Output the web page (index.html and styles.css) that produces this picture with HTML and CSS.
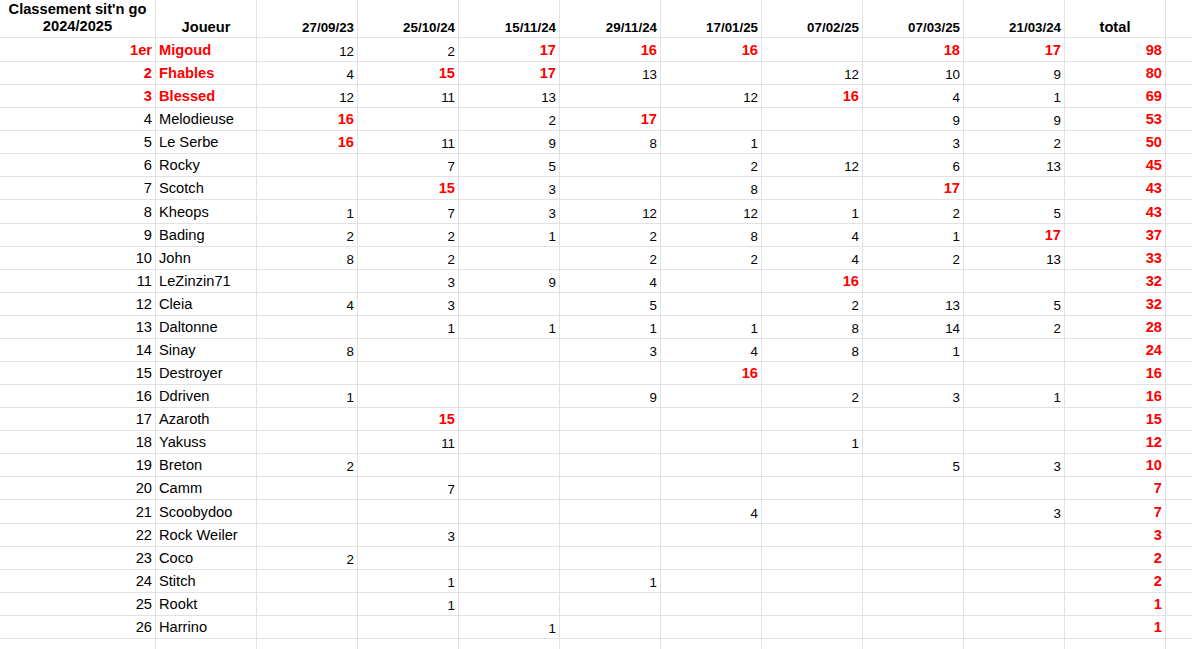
FILE: index.html
```html
<!DOCTYPE html>
<html lang="fr">
<head>
<meta charset="utf-8">
<title>Classement sit'n go 2024/2025</title>
<link rel="stylesheet" href="styles.css">
</head>
<body>
<div class="sheet">
  <div class="row head">
    <div class="c hd ctr title">Classement sit'n go<br>2024/2025</div>
    <div class="c hd ctr">Joueur</div>
    <div class="c hd date">27/09/23</div>
    <div class="c hd date">25/10/24</div>
    <div class="c hd date">15/11/24</div>
    <div class="c hd date">29/11/24</div>
    <div class="c hd date">17/01/25</div>
    <div class="c hd date">07/02/25</div>
    <div class="c hd date">07/03/25</div>
    <div class="c hd date">21/03/24</div>
    <div class="c hd ctr">total</div>
    <div class="c end"></div>
  </div>

  <div class="row first">
    <div class="c hi">1er</div><div class="c nm hi">Migoud</div>
    <div class="c">12</div><div class="c">2</div><div class="c hi">17</div><div class="c hi">16</div><div class="c hi">16</div><div class="c"></div><div class="c hi">18</div><div class="c hi">17</div>
    <div class="c hi">98</div><div class="c end"></div>
  </div>
  <div class="row">
    <div class="c hi">2</div><div class="c nm hi">Fhables</div>
    <div class="c">4</div><div class="c hi">15</div><div class="c hi">17</div><div class="c">13</div><div class="c"></div><div class="c">12</div><div class="c">10</div><div class="c">9</div>
    <div class="c hi">80</div><div class="c end"></div>
  </div>
  <div class="row">
    <div class="c hi">3</div><div class="c nm hi">Blessed</div>
    <div class="c">12</div><div class="c">11</div><div class="c">13</div><div class="c"></div><div class="c">12</div><div class="c hi">16</div><div class="c">4</div><div class="c">1</div>
    <div class="c hi">69</div><div class="c end"></div>
  </div>
  <div class="row">
    <div class="c rk">4</div><div class="c nm">Melodieuse</div>
    <div class="c hi">16</div><div class="c"></div><div class="c">2</div><div class="c hi">17</div><div class="c"></div><div class="c"></div><div class="c">9</div><div class="c">9</div>
    <div class="c hi">53</div><div class="c end"></div>
  </div>
  <div class="row">
    <div class="c rk">5</div><div class="c nm">Le Serbe</div>
    <div class="c hi">16</div><div class="c">11</div><div class="c">9</div><div class="c">8</div><div class="c">1</div><div class="c"></div><div class="c">3</div><div class="c">2</div>
    <div class="c hi">50</div><div class="c end"></div>
  </div>
  <div class="row">
    <div class="c rk">6</div><div class="c nm">Rocky</div>
    <div class="c"></div><div class="c">7</div><div class="c">5</div><div class="c"></div><div class="c">2</div><div class="c">12</div><div class="c">6</div><div class="c">13</div>
    <div class="c hi">45</div><div class="c end"></div>
  </div>
  <div class="row">
    <div class="c rk">7</div><div class="c nm">Scotch</div>
    <div class="c"></div><div class="c hi">15</div><div class="c">3</div><div class="c"></div><div class="c">8</div><div class="c"></div><div class="c hi">17</div><div class="c"></div>
    <div class="c hi">43</div><div class="c end"></div>
  </div>
  <div class="row">
    <div class="c rk">8</div><div class="c nm">Kheops</div>
    <div class="c">1</div><div class="c">7</div><div class="c">3</div><div class="c">12</div><div class="c">12</div><div class="c">1</div><div class="c">2</div><div class="c">5</div>
    <div class="c hi">43</div><div class="c end"></div>
  </div>
  <div class="row">
    <div class="c rk">9</div><div class="c nm">Bading</div>
    <div class="c">2</div><div class="c">2</div><div class="c">1</div><div class="c">2</div><div class="c">8</div><div class="c">4</div><div class="c">1</div><div class="c hi">17</div>
    <div class="c hi">37</div><div class="c end"></div>
  </div>
  <div class="row">
    <div class="c rk">10</div><div class="c nm">John</div>
    <div class="c">8</div><div class="c">2</div><div class="c"></div><div class="c">2</div><div class="c">2</div><div class="c">4</div><div class="c">2</div><div class="c">13</div>
    <div class="c hi">33</div><div class="c end"></div>
  </div>
  <div class="row">
    <div class="c rk">11</div><div class="c nm">LeZinzin71</div>
    <div class="c"></div><div class="c">3</div><div class="c">9</div><div class="c">4</div><div class="c"></div><div class="c hi">16</div><div class="c"></div><div class="c"></div>
    <div class="c hi">32</div><div class="c end"></div>
  </div>
  <div class="row">
    <div class="c rk">12</div><div class="c nm">Cleia</div>
    <div class="c">4</div><div class="c">3</div><div class="c"></div><div class="c">5</div><div class="c"></div><div class="c">2</div><div class="c">13</div><div class="c">5</div>
    <div class="c hi">32</div><div class="c end"></div>
  </div>
  <div class="row">
    <div class="c rk">13</div><div class="c nm">Daltonne</div>
    <div class="c"></div><div class="c">1</div><div class="c">1</div><div class="c">1</div><div class="c">1</div><div class="c">8</div><div class="c">14</div><div class="c">2</div>
    <div class="c hi">28</div><div class="c end"></div>
  </div>
  <div class="row">
    <div class="c rk">14</div><div class="c nm">Sinay</div>
    <div class="c">8</div><div class="c"></div><div class="c"></div><div class="c">3</div><div class="c">4</div><div class="c">8</div><div class="c">1</div><div class="c"></div>
    <div class="c hi">24</div><div class="c end"></div>
  </div>
  <div class="row">
    <div class="c rk">15</div><div class="c nm">Destroyer</div>
    <div class="c"></div><div class="c"></div><div class="c"></div><div class="c"></div><div class="c hi">16</div><div class="c"></div><div class="c"></div><div class="c"></div>
    <div class="c hi">16</div><div class="c end"></div>
  </div>
  <div class="row">
    <div class="c rk">16</div><div class="c nm">Ddriven</div>
    <div class="c">1</div><div class="c"></div><div class="c"></div><div class="c">9</div><div class="c"></div><div class="c">2</div><div class="c">3</div><div class="c">1</div>
    <div class="c hi">16</div><div class="c end"></div>
  </div>
  <div class="row">
    <div class="c rk">17</div><div class="c nm">Azaroth</div>
    <div class="c"></div><div class="c hi">15</div><div class="c"></div><div class="c"></div><div class="c"></div><div class="c"></div><div class="c"></div><div class="c"></div>
    <div class="c hi">15</div><div class="c end"></div>
  </div>
  <div class="row">
    <div class="c rk">18</div><div class="c nm">Yakuss</div>
    <div class="c"></div><div class="c">11</div><div class="c"></div><div class="c"></div><div class="c"></div><div class="c">1</div><div class="c"></div><div class="c"></div>
    <div class="c hi">12</div><div class="c end"></div>
  </div>
  <div class="row">
    <div class="c rk">19</div><div class="c nm">Breton</div>
    <div class="c">2</div><div class="c"></div><div class="c"></div><div class="c"></div><div class="c"></div><div class="c"></div><div class="c">5</div><div class="c">3</div>
    <div class="c hi">10</div><div class="c end"></div>
  </div>
  <div class="row">
    <div class="c rk">20</div><div class="c nm">Camm</div>
    <div class="c"></div><div class="c">7</div><div class="c"></div><div class="c"></div><div class="c"></div><div class="c"></div><div class="c"></div><div class="c"></div>
    <div class="c hi">7</div><div class="c end"></div>
  </div>
  <div class="row">
    <div class="c rk">21</div><div class="c nm">Scoobydoo</div>
    <div class="c"></div><div class="c"></div><div class="c"></div><div class="c"></div><div class="c">4</div><div class="c"></div><div class="c"></div><div class="c">3</div>
    <div class="c hi">7</div><div class="c end"></div>
  </div>
  <div class="row">
    <div class="c rk">22</div><div class="c nm">Rock Weiler</div>
    <div class="c"></div><div class="c">3</div><div class="c"></div><div class="c"></div><div class="c"></div><div class="c"></div><div class="c"></div><div class="c"></div>
    <div class="c hi">3</div><div class="c end"></div>
  </div>
  <div class="row">
    <div class="c rk">23</div><div class="c nm">Coco</div>
    <div class="c">2</div><div class="c"></div><div class="c"></div><div class="c"></div><div class="c"></div><div class="c"></div><div class="c"></div><div class="c"></div>
    <div class="c hi">2</div><div class="c end"></div>
  </div>
  <div class="row">
    <div class="c rk">24</div><div class="c nm">Stitch</div>
    <div class="c"></div><div class="c">1</div><div class="c"></div><div class="c">1</div><div class="c"></div><div class="c"></div><div class="c"></div><div class="c"></div>
    <div class="c hi">2</div><div class="c end"></div>
  </div>
  <div class="row">
    <div class="c rk">25</div><div class="c nm">Rookt</div>
    <div class="c"></div><div class="c">1</div><div class="c"></div><div class="c"></div><div class="c"></div><div class="c"></div><div class="c"></div><div class="c"></div>
    <div class="c hi">1</div><div class="c end"></div>
  </div>
  <div class="row">
    <div class="c rk">26</div><div class="c nm">Harrino</div>
    <div class="c"></div><div class="c"></div><div class="c">1</div><div class="c"></div><div class="c"></div><div class="c"></div><div class="c"></div><div class="c"></div>
    <div class="c hi">1</div><div class="c end"></div>
  </div>
  <div class="row">
    <div class="c rk"></div><div class="c nm"></div>
    <div class="c"></div><div class="c"></div><div class="c"></div><div class="c"></div><div class="c"></div><div class="c"></div><div class="c"></div><div class="c"></div>
    <div class="c"></div><div class="c end"></div>
  </div>
</div>
</body>
</html>
```

FILE: styles.css
```css
html, body {
  margin: 0;
  padding: 0;
  background: #ffffff;
  overflow: hidden;
}

.sheet {
  font-family: "Liberation Sans", Arial, sans-serif;
  color: #000000;
  width: 1192px;
}

.row {
  display: grid;
  grid-template-columns: 156px repeat(10, 101px) 1fr;
  height: 23.08px;
}

.row.first {
  height: 24px;
}

.row.head {
  height: 38px;
}

.c {
  box-sizing: border-box;
  border-right: 1px solid #e2e2e2;
  border-bottom: 1px solid #e2e2e2;
  display: flex;
  align-items: flex-end;
  justify-content: flex-end;
  padding: 0 3px 2px 3px;
  font-size: 13.33px;
  line-height: normal;
  white-space: nowrap;
  overflow: hidden;
}

.c.end {
  border-right: none;
}

.c.rk {
  font-size: 14.67px;
  padding-bottom: 3px;
}

.c.nm {
  justify-content: flex-start;
  font-size: 14.67px;
  padding-bottom: 3px;
}

.c.hi {
  color: #ff0000;
  font-weight: bold;
  font-size: 14.67px;
  padding-bottom: 3px;
}

.c.hd {
  font-weight: bold;
  font-size: 14.67px;
  line-height: 17px;
  padding-bottom: 1px;
}

.c.hd.title {
  padding-bottom: 2px;
}

.c.hd.ctr {
  justify-content: center;
  text-align: center;
}

.c.hd.date {
  font-size: 13.33px;
}
```
